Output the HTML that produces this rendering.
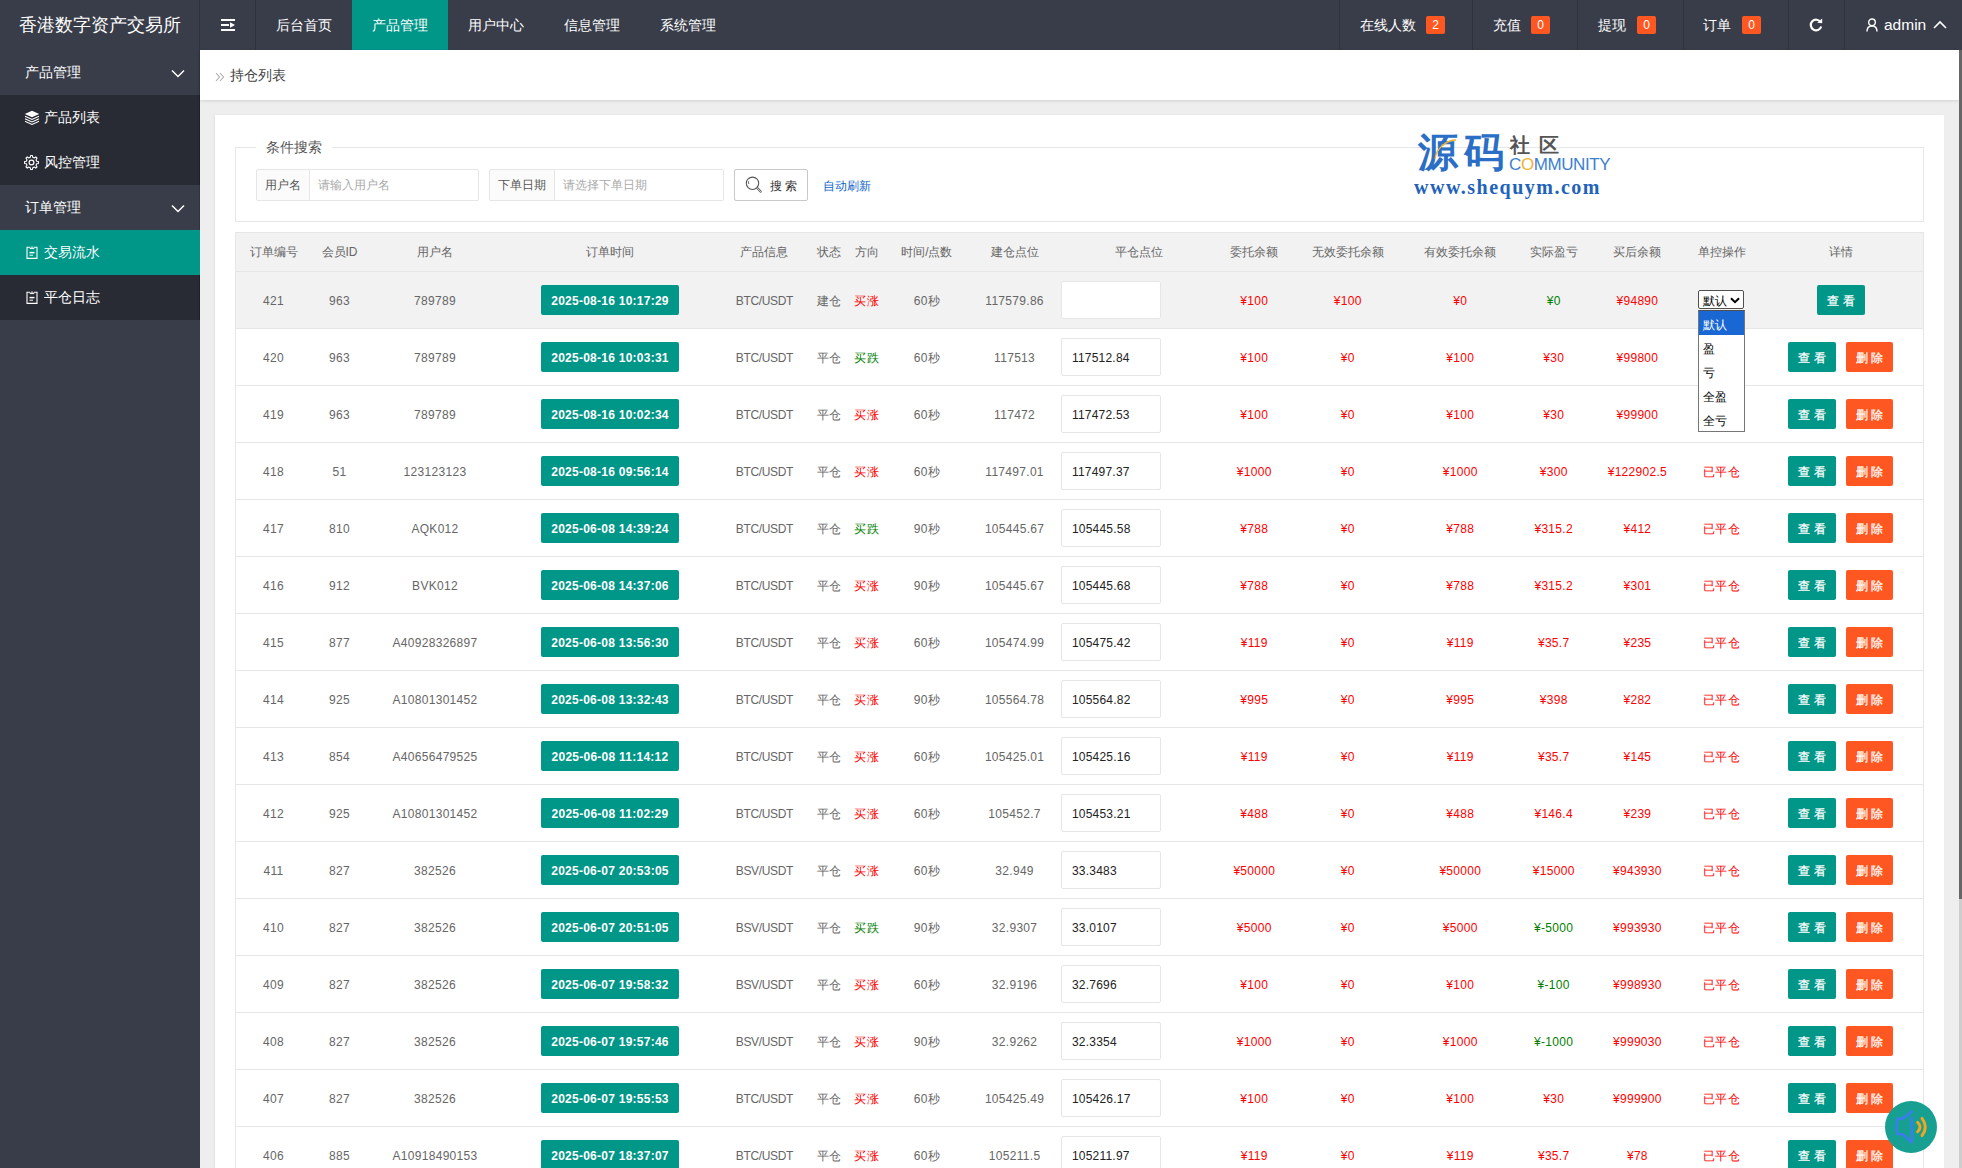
<!DOCTYPE html>
<html><head><meta charset="utf-8">
<style>
*{box-sizing:border-box;margin:0;padding:0}
html,body{width:1962px;height:1168px;overflow:hidden}
body{position:relative;font-family:"Liberation Sans",sans-serif;background:#eeeeee;color:#666}
.abs{position:absolute}
#hdr{position:absolute;left:0;top:0;width:1962px;height:50px;background:#393D49;color:#fff;font-size:14px}
#hdr .logo{position:absolute;left:0;top:0;width:200px;height:50px;line-height:50px;text-align:center;font-size:18px;color:#fff}
#hdr .sep{position:absolute;top:0;width:1px;height:50px;background:#2f333d}
#hdr .nav{position:absolute;top:0;height:50px;line-height:50px;text-align:center;color:#fff}
#hdr .nav.on{background:#009688}
#hdr .rt{position:absolute;top:0;height:50px;line-height:50px;color:#fff;white-space:nowrap}
.badge{position:absolute;top:16px;width:19px;height:18px;line-height:18px;background:#FF5722;color:#fff;font-size:12px;text-align:center;border-radius:2px}
#side{position:absolute;left:0;top:50px;width:200px;height:1118px;background:#393D49;color:#fff;font-size:14px}
#side .it{position:absolute;left:0;width:200px;height:45px;line-height:45px}
#side .grp{padding-left:25px}
#side .sub{padding-left:44px}
#side .dark{background:#282B33}
#side .on{background:#009688}
#crumb{position:absolute;left:200px;top:50px;width:1759px;height:50px;background:#fff;box-shadow:0 1px 3px rgba(0,0,0,.12)}
#scroll{position:absolute;left:1959px;top:50px;width:3px;height:1118px;background:#cdcdcd}
#thumb{position:absolute;left:1959px;top:50px;width:3px;height:849px;background:#666}
#card{position:absolute;left:215px;top:115px;width:1729px;height:1100px;background:#fff;box-shadow:-1px 0 2px rgba(0,0,0,.06)}
#fs{position:absolute;left:235px;top:147px;width:1689px;height:75px;border:1px solid #e6e6e6}
#legend{position:absolute;left:256px;top:137px;width:76px;height:20px;line-height:20px;background:#fff;text-align:center;font-size:14px;color:#555}
.lab{position:absolute;top:169px;height:32px;line-height:30px;border:1px solid #e6e6e6;background:#FBFBFB;font-size:12px;color:#555;text-align:center;border-radius:2px 0 0 2px}
.ipt{position:absolute;top:169px;height:32px;line-height:30px;border:1px solid #e6e6e6;border-left:none;background:#fff;font-size:12px;color:#aaa;padding-left:8px;border-radius:0 2px 2px 0}
#sbtn{position:absolute;left:734px;top:169px;width:74px;height:32px;border:1px solid #C9C9C9;border-radius:2px;background:#fff;font-size:12px;color:#333;line-height:30px}
#auto{position:absolute;left:823px;top:169.5px;height:32px;line-height:32px;font-size:12px;color:#0F66CC}
#tbl{position:absolute;left:235px;top:232px;width:1689px;height:1000px;border-left:1px solid #e6e6e6;border-top:1px solid #e6e6e6;border-right:1px solid #e6e6e6;font-size:12px;color:#666}
#thead{position:absolute;left:0;top:0;width:100%;height:39px;background:#f2f2f2;border-bottom:1px solid #e6e6e6}
#thead .c{line-height:38px}
.row{position:absolute;left:0;width:100%;height:57px;border-bottom:1px solid #e6e6e6;background:#fff}
.row.hov{background:#f2f2f2}
.c{position:absolute;top:0;width:200px;line-height:56px;text-align:center;white-space:nowrap}
.row .c{top:1px;letter-spacing:.3px}
.row .c .tb{position:absolute;left:31px;top:12px}
.red{color:#FF0000}
.grn{color:#008000}
.tbadge{position:absolute;left:31px;top:12px;width:138px;height:30px;line-height:32px;background:#009688;color:#fff;font-weight:bold;border-radius:2px;font-size:12px;letter-spacing:.25px;text-align:center}
.inp{position:absolute;left:825px;top:9px;width:100px;height:38px;line-height:38px;letter-spacing:.2px;border:1px solid #e6e6e6;background:#fff;color:#222;padding-left:10px;border-radius:2px}
.sel{position:absolute;left:1462px;top:18px;width:46px;height:19px;line-height:20px;border:1px solid #505050;border-radius:2px;background:#fff;color:#000;padding-left:4px;font-size:12px}
.sel svg{position:absolute;right:3px;top:6px}
.btn{position:absolute;top:13px;width:48px;height:30px;line-height:32px;text-align:center;color:#fff;font-size:12px;border-radius:2px;-webkit-text-stroke:0.25px #fff}
.b1{left:1581px;background:#009688}
.b2{left:1552px;background:#009688}
.b3{left:1610px;width:47px;background:#FF5722}
#dd{position:absolute;left:1698px;top:310px;width:47px;height:122px;padding-top:0;border:1px solid #767676;border-top-color:#505050;background:#fff;font-size:12px;color:#000}
#dd div{height:24px;line-height:28px;padding-left:4px}
#dd .hl{background:#1967D2;color:#fff}
#fab{position:absolute;left:1885px;top:1101px;width:52px;height:52px;border-radius:50%;background:#17A091}
</style></head><body>
<div id="hdr">
  <div class="logo">香港数字资产交易所</div>
  <div class="sep" style="left:199px"></div>
  <svg class="abs" style="left:221px;top:19px" width="15" height="12" viewBox="0 0 15 12"><rect x="0" y="0" width="14" height="2" fill="#fff"/><rect x="0" y="5" width="8" height="2" fill="#fff"/><path d="M9 3.2L14 6L9 8.8Z" fill="#fff"/><rect x="0" y="10" width="14" height="2" fill="#fff"/></svg>
  <div class="sep" style="left:255px"></div>
  <div class="nav" style="left:256px;width:96px">后台首页</div>
  <div class="nav on" style="left:352px;width:96px">产品管理</div>
  <div class="nav" style="left:448px;width:96px">用户中心</div>
  <div class="nav" style="left:544px;width:96px">信息管理</div>
  <div class="nav" style="left:640px;width:96px">系统管理</div>
  <div class="sep" style="left:1339px"></div>
  <div class="rt" style="left:1360px">在线人数</div><div class="badge" style="left:1426px">2</div>
  <div class="sep" style="left:1472px"></div>
  <div class="rt" style="left:1493px">充值</div><div class="badge" style="left:1531px">0</div>
  <div class="sep" style="left:1577px"></div>
  <div class="rt" style="left:1598px">提现</div><div class="badge" style="left:1637px">0</div>
  <div class="sep" style="left:1683px"></div>
  <div class="rt" style="left:1703px">订单</div><div class="badge" style="left:1742px">0</div>
  <div class="sep" style="left:1788px"></div>
  <svg class="abs" style="left:1809px;top:18px" width="14" height="14" viewBox="0 0 14 14"><path d="M11.6 4.2A5.3 5.3 0 1 0 12.2 8.5" stroke="#fff" stroke-width="2.2" fill="none"/><path d="M8.2 4.8L13.2 5.2L13.2 0.4Z" fill="#fff"/></svg>
  <div class="sep" style="left:1844px"></div>
  <svg class="abs" style="left:1866px;top:18px" width="12" height="14" viewBox="0 0 12 14"><circle cx="6" cy="4.3" r="3.3" stroke="#fff" stroke-width="1.4" fill="none"/><path d="M1 13.5C1 9.5 3 8 6 8C9 8 11 9.5 11 13.5" stroke="#fff" stroke-width="1.4" fill="none"/></svg>
  <div class="rt" style="left:1884px;top:0;font-size:15.5px">admin</div>
  <svg class="abs" style="left:1933px;top:20px" width="14" height="10" viewBox="0 0 14 10"><path d="M1 8L7 2L13 8" stroke="#fff" stroke-width="1.6" fill="none"/></svg>
</div>
<div id="side">
  <div class="it grp" style="top:0">产品管理</div>
  <svg class="abs" style="left:171px;top:19px" width="14" height="9" viewBox="0 0 14 9"><path d="M1 1.5L7 7.5L13 1.5" stroke="#fff" stroke-width="1.5" fill="none"/></svg>
  <div class="it sub dark" style="top:45px">产品列表</div>
  <div class="it sub dark" style="top:90px">风控管理</div>
  <div class="it grp" style="top:135px">订单管理</div>
  <svg class="abs" style="left:171px;top:154px" width="14" height="9" viewBox="0 0 14 9"><path d="M1 1.5L7 7.5L13 1.5" stroke="#fff" stroke-width="1.5" fill="none"/></svg>
  <div class="it sub on" style="top:180px">交易流水</div>
  <div class="it sub dark" style="top:225px">平仓日志</div>
  <!-- icons -->
  <svg class="abs" style="left:24px;top:60px" width="16" height="15" viewBox="0 0 16 15"><path d="M8 0.8L15.2 4L8 7.2L0.8 4Z" fill="#fff"/><path d="M1 6.2L8 9.4L15 6.2M1 8.7L8 11.9L15 8.7M1 11.2L8 14.4L15 11.2" stroke="#fff" stroke-width="1.1" fill="none"/></svg>
  <svg class="abs" style="left:24px;top:105px" width="15" height="15" viewBox="0 0 15 15"><path d="M12.65 6.26 L14.44 6.57 L14.44 8.43 L12.65 8.74 L12.02 10.27 L13.06 11.75 L11.75 13.06 L10.27 12.02 L8.74 12.65 L8.43 14.44 L6.57 14.44 L6.26 12.65 L4.73 12.02 L3.25 13.06 L1.94 11.75 L2.98 10.27 L2.35 8.74 L0.56 8.43 L0.56 6.57 L2.35 6.26 L2.98 4.73 L1.94 3.25 L3.25 1.94 L4.73 2.98 L6.26 2.35 L6.57 0.56 L8.43 0.56 L8.74 2.35 L10.27 2.98 L11.75 1.94 L13.06 3.25 L12.02 4.73Z" stroke="#fff" stroke-width="1.1" fill="none" stroke-linejoin="round"/><circle cx="7.5" cy="7.5" r="2.4" stroke="#fff" stroke-width="1.2" fill="none"/></svg>
  <svg class="abs" style="left:26px;top:196px" width="12" height="13" viewBox="0 0 12 13"><path d="M4 1.2H1V12.4H11V1.2H8" stroke="#fff" stroke-width="1.1" fill="none"/><path d="M4 2.6L6 0.6L8 2.6Z" stroke="#fff" stroke-width="1" fill="none"/><path d="M3.5 6.6H8.5" stroke="#fff" stroke-width="1.5"/><path d="M3.5 9.2H7" stroke="#fff" stroke-width="1"/></svg>
  <svg class="abs" style="left:26px;top:241px" width="12" height="13" viewBox="0 0 12 13"><path d="M4 1.2H1V12.4H11V1.2H8" stroke="#fff" stroke-width="1.1" fill="none"/><path d="M4 2.6L6 0.6L8 2.6Z" stroke="#fff" stroke-width="1" fill="none"/><path d="M3.5 6.6H8.5" stroke="#fff" stroke-width="1.5"/><path d="M3.5 9.2H7" stroke="#fff" stroke-width="1"/></svg>
</div>
<div class="abs" style="left:199px;top:95px;width:1px;height:90px;background:#1d2029"></div><div class="abs" style="left:199px;top:275px;width:1px;height:45px;background:#1d2029"></div><div class="abs" style="left:199px;top:50px;width:1px;height:45px;background:#30343f"></div><div class="abs" style="left:199px;top:185px;width:1px;height:45px;background:#30343f"></div>
<div id="crumb"></div>
<svg class="abs" style="left:215px;top:72px" width="10" height="10" viewBox="0 0 10 10"><path d="M1 1L4.5 5L1 9M5 1L8.5 5L5 9" stroke="#aaa" stroke-width="1.1" fill="none"/></svg>
<div class="abs" style="left:230px;top:64px;height:22px;line-height:22px;font-size:14px;color:#444">持仓列表</div>
<div id="scroll"></div><div id="thumb"></div>
<div id="card"></div>
<div id="fs"></div>
<div id="legend">条件搜索</div>
<div class="lab" style="left:256px;width:54px">用户名</div>
<div class="ipt" style="left:310px;width:169px">请输入用户名</div>
<div class="lab" style="left:489px;width:66px">下单日期</div>
<div class="ipt" style="left:555px;width:169px">请选择下单日期</div>
<div id="sbtn"><svg class="abs" style="left:10px;top:6px" width="18" height="18" viewBox="0 0 18 18"><circle cx="7.5" cy="7.3" r="6.2" stroke="#555" stroke-width="1.1" fill="none"/><path d="M3.6 5.2Q3.2 6.8 3.9 8" stroke="#555" stroke-width="0.9" fill="none"/><path d="M12 11.8L15.6 15.6" stroke="#555" stroke-width="2.2" stroke-linecap="round"/><path d="M12 11.8L15.6 15.6" stroke="#fff" stroke-width="0.8" stroke-linecap="round"/></svg><span class="abs" style="left:35px;top:1px">搜 索</span></div>
<div id="auto">自动刷新</div>
<!-- watermark -->
<div class="abs" style="left:1418px;top:128px;font-size:40px;color:#2A6EC6;line-height:48px;letter-spacing:6px;font-weight:bold">源码</div>
<svg class="abs" style="left:1432px;top:137px" width="28" height="26" viewBox="0 0 28 26"><path d="M3 22C4 12 14 3 24 3" stroke="#F3B22E" stroke-width="1.3" fill="none"/></svg>
<div class="abs" style="left:1510px;top:133px;font-size:20px;font-weight:bold;color:#555;line-height:24px;letter-spacing:9px">社区</div>
<div class="abs" style="left:1509px;top:155px;font-size:17px;color:#3C7FD0;line-height:20px;letter-spacing:-0.4px">C<span style="color:#F3B22E">O</span>MMUNITY</div>
<div class="abs" style="left:1414px;top:175px;font-family:'Liberation Serif',serif;font-size:20px;font-weight:bold;color:#1F63BA;line-height:24px;letter-spacing:1.5px">www.shequym.com</div>
<div id="tbl">
  <div id="thead"><div class="c" style="left:-62.5px">订单编号</div><div class="c" style="left:3.5px">会员ID</div><div class="c" style="left:99.0px">用户名</div><div class="c" style="left:274.0px">订单时间</div><div class="c" style="left:428.4px">产品信息</div><div class="c" style="left:493.2px">状态</div><div class="c" style="left:530.8px">方向</div><div class="c" style="left:590.8px">时间/点数</div><div class="c" style="left:678.6px">建仓点位</div><div class="c" style="left:803.0px">平仓点位</div><div class="c" style="left:918.3px">委托余额</div><div class="c" style="left:1011.8px">无效委托余额</div><div class="c" style="left:1124.3px">有效委托余额</div><div class="c" style="left:1217.7px">实际盈亏</div><div class="c" style="left:1301.4px">买后余额</div><div class="c" style="left:1385.5px">单控操作</div><div class="c" style="left:1505.0px">详情</div></div>
  <div class="row hov" style="top:39px"><div class="c" style="left:-62.5px">421</div><div class="c" style="left:3.5px">963</div><div class="c" style="left:99.0px">789789</div><div class="c" style="left:274.0px"><span class="tbadge">2025-08-16 10:17:29</span></div><div class="c" style="left:428.4px"><span style="letter-spacing:-0.35px">BTC/USDT</span></div><div class="c" style="left:493.2px">建仓</div><div class="c" style="left:530.8px"><span class="red">买涨</span></div><div class="c" style="left:590.8px">60秒</div><div class="c" style="left:678.6px">117579.86</div><div class="inp"></div><div class="c" style="left:918.3px"><span class="red">¥100</span></div><div class="c" style="left:1011.8px"><span class="red">¥100</span></div><div class="c" style="left:1124.3px"><span class="red">¥0</span></div><div class="c" style="left:1217.7px"><span class="grn">¥0</span></div><div class="c" style="left:1301.4px"><span class="red">¥94890</span></div><div class="sel">默认<svg width="10" height="7" viewBox="0 0 10 7"><path d="M1 1.2L5 5.2L9 1.2" stroke="#000" stroke-width="2" fill="none"/></svg></div><div class="btn b1">查 看</div></div>
<div class="row" style="top:96px"><div class="c" style="left:-62.5px">420</div><div class="c" style="left:3.5px">963</div><div class="c" style="left:99.0px">789789</div><div class="c" style="left:274.0px"><span class="tbadge">2025-08-16 10:03:31</span></div><div class="c" style="left:428.4px"><span style="letter-spacing:-0.35px">BTC/USDT</span></div><div class="c" style="left:493.2px">平仓</div><div class="c" style="left:530.8px"><span class="grn">买跌</span></div><div class="c" style="left:590.8px">60秒</div><div class="c" style="left:678.6px">117513</div><div class="inp">117512.84</div><div class="c" style="left:918.3px"><span class="red">¥100</span></div><div class="c" style="left:1011.8px"><span class="red">¥0</span></div><div class="c" style="left:1124.3px"><span class="red">¥100</span></div><div class="c" style="left:1217.7px"><span class="red">¥30</span></div><div class="c" style="left:1301.4px"><span class="red">¥99800</span></div><div class="btn b2">查 看</div><div class="btn b3">删 除</div></div>
<div class="row" style="top:153px"><div class="c" style="left:-62.5px">419</div><div class="c" style="left:3.5px">963</div><div class="c" style="left:99.0px">789789</div><div class="c" style="left:274.0px"><span class="tbadge">2025-08-16 10:02:34</span></div><div class="c" style="left:428.4px"><span style="letter-spacing:-0.35px">BTC/USDT</span></div><div class="c" style="left:493.2px">平仓</div><div class="c" style="left:530.8px"><span class="red">买涨</span></div><div class="c" style="left:590.8px">60秒</div><div class="c" style="left:678.6px">117472</div><div class="inp">117472.53</div><div class="c" style="left:918.3px"><span class="red">¥100</span></div><div class="c" style="left:1011.8px"><span class="red">¥0</span></div><div class="c" style="left:1124.3px"><span class="red">¥100</span></div><div class="c" style="left:1217.7px"><span class="red">¥30</span></div><div class="c" style="left:1301.4px"><span class="red">¥99900</span></div><div class="btn b2">查 看</div><div class="btn b3">删 除</div></div>
<div class="row" style="top:210px"><div class="c" style="left:-62.5px">418</div><div class="c" style="left:3.5px">51</div><div class="c" style="left:99.0px">123123123</div><div class="c" style="left:274.0px"><span class="tbadge">2025-08-16 09:56:14</span></div><div class="c" style="left:428.4px"><span style="letter-spacing:-0.35px">BTC/USDT</span></div><div class="c" style="left:493.2px">平仓</div><div class="c" style="left:530.8px"><span class="red">买涨</span></div><div class="c" style="left:590.8px">60秒</div><div class="c" style="left:678.6px">117497.01</div><div class="inp">117497.37</div><div class="c" style="left:918.3px"><span class="red">¥1000</span></div><div class="c" style="left:1011.8px"><span class="red">¥0</span></div><div class="c" style="left:1124.3px"><span class="red">¥1000</span></div><div class="c" style="left:1217.7px"><span class="red">¥300</span></div><div class="c" style="left:1301.4px"><span class="red">¥122902.5</span></div><div class="c" style="left:1385.5px"><span class="red">已平仓</span></div><div class="btn b2">查 看</div><div class="btn b3">删 除</div></div>
<div class="row" style="top:267px"><div class="c" style="left:-62.5px">417</div><div class="c" style="left:3.5px">810</div><div class="c" style="left:99.0px">AQK012</div><div class="c" style="left:274.0px"><span class="tbadge">2025-06-08 14:39:24</span></div><div class="c" style="left:428.4px"><span style="letter-spacing:-0.35px">BTC/USDT</span></div><div class="c" style="left:493.2px">平仓</div><div class="c" style="left:530.8px"><span class="grn">买跌</span></div><div class="c" style="left:590.8px">90秒</div><div class="c" style="left:678.6px">105445.67</div><div class="inp">105445.58</div><div class="c" style="left:918.3px"><span class="red">¥788</span></div><div class="c" style="left:1011.8px"><span class="red">¥0</span></div><div class="c" style="left:1124.3px"><span class="red">¥788</span></div><div class="c" style="left:1217.7px"><span class="red">¥315.2</span></div><div class="c" style="left:1301.4px"><span class="red">¥412</span></div><div class="c" style="left:1385.5px"><span class="red">已平仓</span></div><div class="btn b2">查 看</div><div class="btn b3">删 除</div></div>
<div class="row" style="top:324px"><div class="c" style="left:-62.5px">416</div><div class="c" style="left:3.5px">912</div><div class="c" style="left:99.0px">BVK012</div><div class="c" style="left:274.0px"><span class="tbadge">2025-06-08 14:37:06</span></div><div class="c" style="left:428.4px"><span style="letter-spacing:-0.35px">BTC/USDT</span></div><div class="c" style="left:493.2px">平仓</div><div class="c" style="left:530.8px"><span class="red">买涨</span></div><div class="c" style="left:590.8px">90秒</div><div class="c" style="left:678.6px">105445.67</div><div class="inp">105445.68</div><div class="c" style="left:918.3px"><span class="red">¥788</span></div><div class="c" style="left:1011.8px"><span class="red">¥0</span></div><div class="c" style="left:1124.3px"><span class="red">¥788</span></div><div class="c" style="left:1217.7px"><span class="red">¥315.2</span></div><div class="c" style="left:1301.4px"><span class="red">¥301</span></div><div class="c" style="left:1385.5px"><span class="red">已平仓</span></div><div class="btn b2">查 看</div><div class="btn b3">删 除</div></div>
<div class="row" style="top:381px"><div class="c" style="left:-62.5px">415</div><div class="c" style="left:3.5px">877</div><div class="c" style="left:99.0px">A40928326897</div><div class="c" style="left:274.0px"><span class="tbadge">2025-06-08 13:56:30</span></div><div class="c" style="left:428.4px"><span style="letter-spacing:-0.35px">BTC/USDT</span></div><div class="c" style="left:493.2px">平仓</div><div class="c" style="left:530.8px"><span class="red">买涨</span></div><div class="c" style="left:590.8px">60秒</div><div class="c" style="left:678.6px">105474.99</div><div class="inp">105475.42</div><div class="c" style="left:918.3px"><span class="red">¥119</span></div><div class="c" style="left:1011.8px"><span class="red">¥0</span></div><div class="c" style="left:1124.3px"><span class="red">¥119</span></div><div class="c" style="left:1217.7px"><span class="red">¥35.7</span></div><div class="c" style="left:1301.4px"><span class="red">¥235</span></div><div class="c" style="left:1385.5px"><span class="red">已平仓</span></div><div class="btn b2">查 看</div><div class="btn b3">删 除</div></div>
<div class="row" style="top:438px"><div class="c" style="left:-62.5px">414</div><div class="c" style="left:3.5px">925</div><div class="c" style="left:99.0px">A10801301452</div><div class="c" style="left:274.0px"><span class="tbadge">2025-06-08 13:32:43</span></div><div class="c" style="left:428.4px"><span style="letter-spacing:-0.35px">BTC/USDT</span></div><div class="c" style="left:493.2px">平仓</div><div class="c" style="left:530.8px"><span class="red">买涨</span></div><div class="c" style="left:590.8px">90秒</div><div class="c" style="left:678.6px">105564.78</div><div class="inp">105564.82</div><div class="c" style="left:918.3px"><span class="red">¥995</span></div><div class="c" style="left:1011.8px"><span class="red">¥0</span></div><div class="c" style="left:1124.3px"><span class="red">¥995</span></div><div class="c" style="left:1217.7px"><span class="red">¥398</span></div><div class="c" style="left:1301.4px"><span class="red">¥282</span></div><div class="c" style="left:1385.5px"><span class="red">已平仓</span></div><div class="btn b2">查 看</div><div class="btn b3">删 除</div></div>
<div class="row" style="top:495px"><div class="c" style="left:-62.5px">413</div><div class="c" style="left:3.5px">854</div><div class="c" style="left:99.0px">A40656479525</div><div class="c" style="left:274.0px"><span class="tbadge">2025-06-08 11:14:12</span></div><div class="c" style="left:428.4px"><span style="letter-spacing:-0.35px">BTC/USDT</span></div><div class="c" style="left:493.2px">平仓</div><div class="c" style="left:530.8px"><span class="red">买涨</span></div><div class="c" style="left:590.8px">60秒</div><div class="c" style="left:678.6px">105425.01</div><div class="inp">105425.16</div><div class="c" style="left:918.3px"><span class="red">¥119</span></div><div class="c" style="left:1011.8px"><span class="red">¥0</span></div><div class="c" style="left:1124.3px"><span class="red">¥119</span></div><div class="c" style="left:1217.7px"><span class="red">¥35.7</span></div><div class="c" style="left:1301.4px"><span class="red">¥145</span></div><div class="c" style="left:1385.5px"><span class="red">已平仓</span></div><div class="btn b2">查 看</div><div class="btn b3">删 除</div></div>
<div class="row" style="top:552px"><div class="c" style="left:-62.5px">412</div><div class="c" style="left:3.5px">925</div><div class="c" style="left:99.0px">A10801301452</div><div class="c" style="left:274.0px"><span class="tbadge">2025-06-08 11:02:29</span></div><div class="c" style="left:428.4px"><span style="letter-spacing:-0.35px">BTC/USDT</span></div><div class="c" style="left:493.2px">平仓</div><div class="c" style="left:530.8px"><span class="red">买涨</span></div><div class="c" style="left:590.8px">60秒</div><div class="c" style="left:678.6px">105452.7</div><div class="inp">105453.21</div><div class="c" style="left:918.3px"><span class="red">¥488</span></div><div class="c" style="left:1011.8px"><span class="red">¥0</span></div><div class="c" style="left:1124.3px"><span class="red">¥488</span></div><div class="c" style="left:1217.7px"><span class="red">¥146.4</span></div><div class="c" style="left:1301.4px"><span class="red">¥239</span></div><div class="c" style="left:1385.5px"><span class="red">已平仓</span></div><div class="btn b2">查 看</div><div class="btn b3">删 除</div></div>
<div class="row" style="top:609px"><div class="c" style="left:-62.5px">411</div><div class="c" style="left:3.5px">827</div><div class="c" style="left:99.0px">382526</div><div class="c" style="left:274.0px"><span class="tbadge">2025-06-07 20:53:05</span></div><div class="c" style="left:428.4px"><span style="letter-spacing:-0.35px">BSV/USDT</span></div><div class="c" style="left:493.2px">平仓</div><div class="c" style="left:530.8px"><span class="red">买涨</span></div><div class="c" style="left:590.8px">60秒</div><div class="c" style="left:678.6px">32.949</div><div class="inp">33.3483</div><div class="c" style="left:918.3px"><span class="red">¥50000</span></div><div class="c" style="left:1011.8px"><span class="red">¥0</span></div><div class="c" style="left:1124.3px"><span class="red">¥50000</span></div><div class="c" style="left:1217.7px"><span class="red">¥15000</span></div><div class="c" style="left:1301.4px"><span class="red">¥943930</span></div><div class="c" style="left:1385.5px"><span class="red">已平仓</span></div><div class="btn b2">查 看</div><div class="btn b3">删 除</div></div>
<div class="row" style="top:666px"><div class="c" style="left:-62.5px">410</div><div class="c" style="left:3.5px">827</div><div class="c" style="left:99.0px">382526</div><div class="c" style="left:274.0px"><span class="tbadge">2025-06-07 20:51:05</span></div><div class="c" style="left:428.4px"><span style="letter-spacing:-0.35px">BSV/USDT</span></div><div class="c" style="left:493.2px">平仓</div><div class="c" style="left:530.8px"><span class="grn">买跌</span></div><div class="c" style="left:590.8px">90秒</div><div class="c" style="left:678.6px">32.9307</div><div class="inp">33.0107</div><div class="c" style="left:918.3px"><span class="red">¥5000</span></div><div class="c" style="left:1011.8px"><span class="red">¥0</span></div><div class="c" style="left:1124.3px"><span class="red">¥5000</span></div><div class="c" style="left:1217.7px"><span class="grn">¥-5000</span></div><div class="c" style="left:1301.4px"><span class="red">¥993930</span></div><div class="c" style="left:1385.5px"><span class="red">已平仓</span></div><div class="btn b2">查 看</div><div class="btn b3">删 除</div></div>
<div class="row" style="top:723px"><div class="c" style="left:-62.5px">409</div><div class="c" style="left:3.5px">827</div><div class="c" style="left:99.0px">382526</div><div class="c" style="left:274.0px"><span class="tbadge">2025-06-07 19:58:32</span></div><div class="c" style="left:428.4px"><span style="letter-spacing:-0.35px">BSV/USDT</span></div><div class="c" style="left:493.2px">平仓</div><div class="c" style="left:530.8px"><span class="red">买涨</span></div><div class="c" style="left:590.8px">60秒</div><div class="c" style="left:678.6px">32.9196</div><div class="inp">32.7696</div><div class="c" style="left:918.3px"><span class="red">¥100</span></div><div class="c" style="left:1011.8px"><span class="red">¥0</span></div><div class="c" style="left:1124.3px"><span class="red">¥100</span></div><div class="c" style="left:1217.7px"><span class="grn">¥-100</span></div><div class="c" style="left:1301.4px"><span class="red">¥998930</span></div><div class="c" style="left:1385.5px"><span class="red">已平仓</span></div><div class="btn b2">查 看</div><div class="btn b3">删 除</div></div>
<div class="row" style="top:780px"><div class="c" style="left:-62.5px">408</div><div class="c" style="left:3.5px">827</div><div class="c" style="left:99.0px">382526</div><div class="c" style="left:274.0px"><span class="tbadge">2025-06-07 19:57:46</span></div><div class="c" style="left:428.4px"><span style="letter-spacing:-0.35px">BSV/USDT</span></div><div class="c" style="left:493.2px">平仓</div><div class="c" style="left:530.8px"><span class="red">买涨</span></div><div class="c" style="left:590.8px">90秒</div><div class="c" style="left:678.6px">32.9262</div><div class="inp">32.3354</div><div class="c" style="left:918.3px"><span class="red">¥1000</span></div><div class="c" style="left:1011.8px"><span class="red">¥0</span></div><div class="c" style="left:1124.3px"><span class="red">¥1000</span></div><div class="c" style="left:1217.7px"><span class="grn">¥-1000</span></div><div class="c" style="left:1301.4px"><span class="red">¥999030</span></div><div class="c" style="left:1385.5px"><span class="red">已平仓</span></div><div class="btn b2">查 看</div><div class="btn b3">删 除</div></div>
<div class="row" style="top:837px"><div class="c" style="left:-62.5px">407</div><div class="c" style="left:3.5px">827</div><div class="c" style="left:99.0px">382526</div><div class="c" style="left:274.0px"><span class="tbadge">2025-06-07 19:55:53</span></div><div class="c" style="left:428.4px"><span style="letter-spacing:-0.35px">BTC/USDT</span></div><div class="c" style="left:493.2px">平仓</div><div class="c" style="left:530.8px"><span class="red">买涨</span></div><div class="c" style="left:590.8px">60秒</div><div class="c" style="left:678.6px">105425.49</div><div class="inp">105426.17</div><div class="c" style="left:918.3px"><span class="red">¥100</span></div><div class="c" style="left:1011.8px"><span class="red">¥0</span></div><div class="c" style="left:1124.3px"><span class="red">¥100</span></div><div class="c" style="left:1217.7px"><span class="red">¥30</span></div><div class="c" style="left:1301.4px"><span class="red">¥999900</span></div><div class="c" style="left:1385.5px"><span class="red">已平仓</span></div><div class="btn b2">查 看</div><div class="btn b3">删 除</div></div>
<div class="row" style="top:894px"><div class="c" style="left:-62.5px">406</div><div class="c" style="left:3.5px">885</div><div class="c" style="left:99.0px">A10918490153</div><div class="c" style="left:274.0px"><span class="tbadge">2025-06-07 18:37:07</span></div><div class="c" style="left:428.4px"><span style="letter-spacing:-0.35px">BTC/USDT</span></div><div class="c" style="left:493.2px">平仓</div><div class="c" style="left:530.8px"><span class="red">买涨</span></div><div class="c" style="left:590.8px">60秒</div><div class="c" style="left:678.6px">105211.5</div><div class="inp">105211.97</div><div class="c" style="left:918.3px"><span class="red">¥119</span></div><div class="c" style="left:1011.8px"><span class="red">¥0</span></div><div class="c" style="left:1124.3px"><span class="red">¥119</span></div><div class="c" style="left:1217.7px"><span class="red">¥35.7</span></div><div class="c" style="left:1301.4px"><span class="red">¥78</span></div><div class="c" style="left:1385.5px"><span class="red">已平仓</span></div><div class="btn b2">查 看</div><div class="btn b3">删 除</div></div>
</div>
<div id="dd"><div class="hl">默认</div><div>盈</div><div>亏</div><div>全盈</div><div>全亏</div></div>
<div id="fab"><svg class="abs" style="left:0;top:0" width="52" height="52" viewBox="0 0 52 52"><path d="M26.7 10.6L17.7 17.6H12.6Q10.6 25.5 12.6 33.3H17.7L26.7 41.2V16.8" stroke="#3B7DED" stroke-width="2.6" fill="none" stroke-linejoin="round" stroke-linecap="round"/><path d="M32.6 21.2Q37.5 26 32.6 30.8" stroke="#F5A51E" stroke-width="2.9" fill="none" stroke-linecap="round"/><path d="M37 17.3Q43.6 26 37 34.6" stroke="#F5A51E" stroke-width="2.9" fill="none" stroke-linecap="round"/></svg></div>
</body></html>
